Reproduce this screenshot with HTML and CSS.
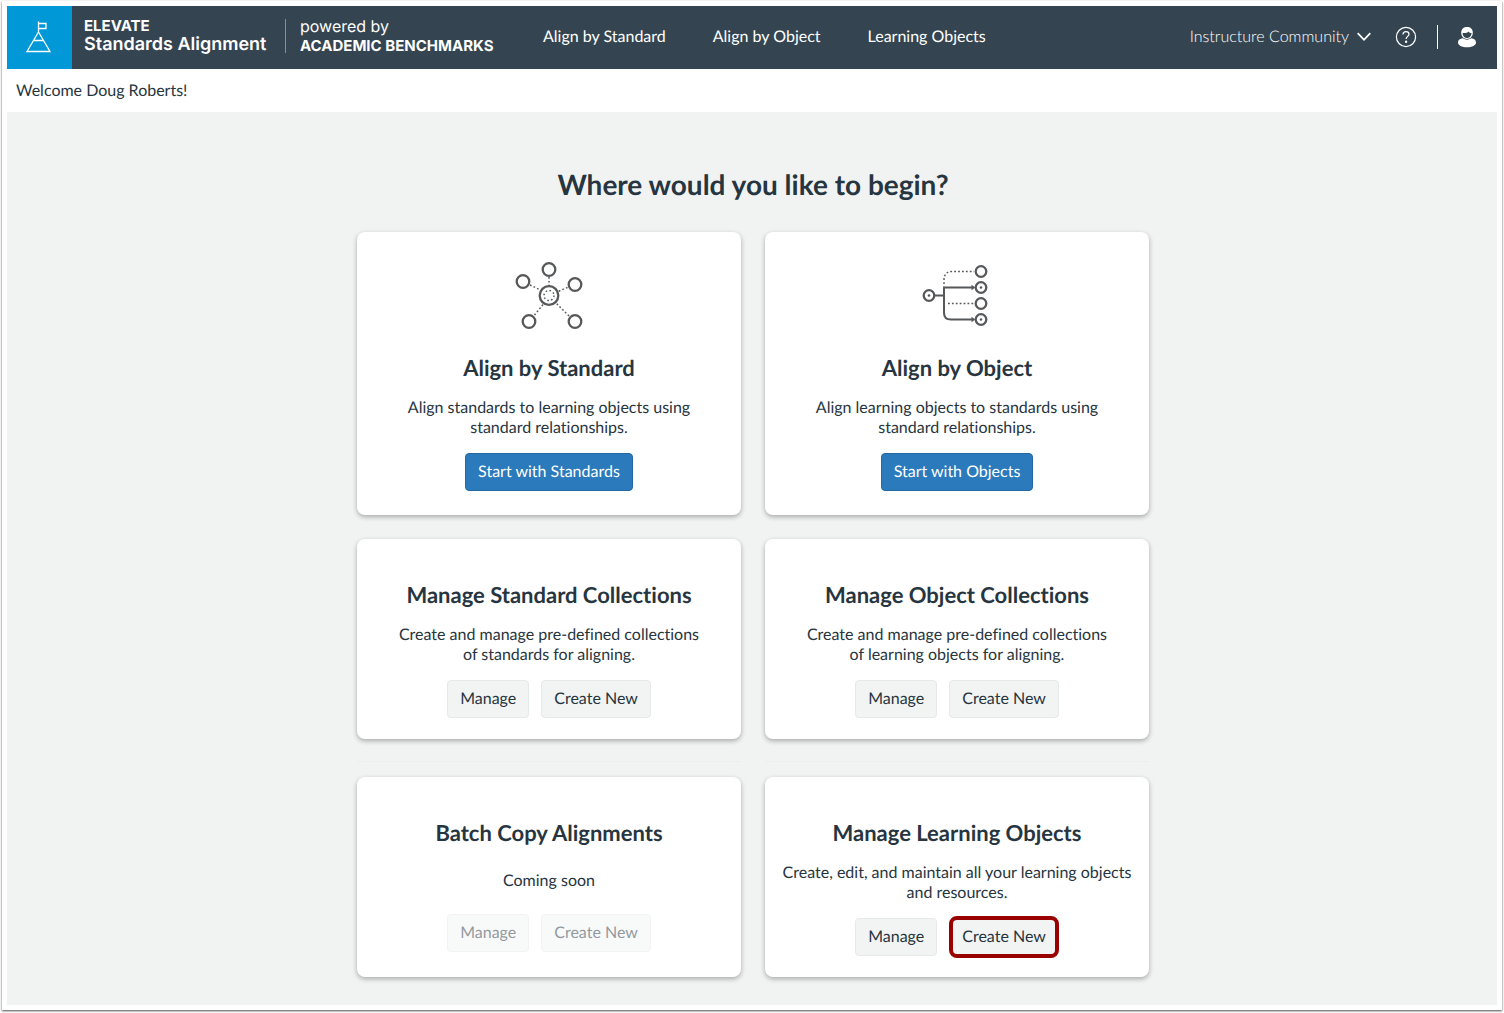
FILE: index.html
```html
<!DOCTYPE html>
<html lang="en">
<head>
<meta charset="utf-8">
<meta name="viewport" content="width=device-width, initial-scale=1">
<title>Elevate Standards Alignment</title>
<link rel="stylesheet" href="styles.css">
</head>
<body>
<div class="frame">
  <header class="topbar">
    <a class="logo" href="#" aria-label="Home">
      <svg width="28" height="36" viewBox="0 0 28 36" fill="none" stroke="#fff" stroke-width="1.3"><path d="M13.500 13V2.500M13.500 4.500h7.500v5h-7.500M13.500 13L2 32.500h23zM8.600 21.500h9.800"/></svg>
    </a>
    <div class="brand">
      <span class="brand-small">ELEVATE</span>
      <span class="brand-large">Standards Alignment</span>
    </div>
    <div class="powered">
      <span class="powered-by">powered by</span>
      <span class="powered-name">ACADEMIC BENCHMARKS</span>
    </div>
    <nav class="menu">
      <a href="#">Align by Standard</a>
      <a href="#">Align by Object</a>
      <a href="#">Learning Objects</a>
    </nav>
    <div class="account">
      <button class="org" type="button">Instructure Community
        <svg width="14" height="10" viewBox="0 0 14 10" fill="none" stroke="#fff" stroke-width="1.800"><path d="M.7 1.200L7 7.800l6.300-6.600"/></svg>
      </button>
      <button class="help" type="button" aria-label="Help">
        <svg width="22" height="22" viewBox="0 0 22 22" fill="none" stroke="#fff" stroke-width="1.200"><circle cx="11" cy="11" r="9.600"/><path d="M8 8.600C8 6.700 9.200 5.600 11 5.600s3 1.100 3 2.700c0 2.100-2.900 2.200-2.900 4.800"/><circle cx="11.100" cy="15.700" r=".6" fill="#fff"/></svg>
      </button>
      <span class="separator"></span>
      <button class="user" type="button" aria-label="Profile">
        <svg width="20" height="22" viewBox="0 0 20 22" fill="#fff"><path d="M4.200 6.800C4.200 3 6.600 1 10 1s5.800 2 5.800 5.800c0 3.400-2.500 6.200-5.800 6.200S4.200 10.200 4.200 6.800z"/><path d="M5.600 7c2.700.4 4.800-.2 6-1.500.7 1 1.700 1.500 2.900 1.500 0 2.800-1.900 5-4.500 5S5.600 9.800 5.600 7z" fill="#344551"/><path d="M1 16.500c0-2.400 1.900-3.900 4.800-4.200 2.600 1.800 5.800 1.800 8.400 0 2.900.3 4.800 1.800 4.800 4.200 0 3-4 4.800-9 4.800s-9-1.800-9-4.800z"/></svg>
      </button>
    </div>
  </header>
  <p class="welcome">Welcome Doug Roberts!</p>
  <main class="content">
    <h1>Where would you like to begin?</h1>
    <div class="cards">
      <section class="card card-start">
        <svg class="art" width="80" height="80" viewBox="0 0 80 80" fill="none" stroke="#56585a" stroke-width="2.300"><circle cx="40" cy="13.500" r="6.300"/><circle cx="14" cy="25.500" r="6.300"/><circle cx="66" cy="28.500" r="6.300"/><circle cx="20" cy="65.500" r="6.300"/><circle cx="66" cy="65.500" r="6.300"/><circle cx="40" cy="39.500" r="9.300"/><circle cx="40" cy="39.500" r="5" stroke-width="1.500" stroke-dasharray="1.600 2.300"/><path d="M40 21v9M21 29l9.500 4.500M58.500 31.500L49 35.500M25.500 59L34 48.500M60 60L47.500 47.500" stroke-width="1.500" stroke-dasharray="1.700 2.200"/></svg>
        <h2>Align by Standard</h2>
        <p>Align standards to learning objects using<br>standard relationships.</p>
        <div class="actions"><button class="btn btn-primary" type="button">Start with Standards</button></div>
      </section>
      <section class="card card-start">
        <svg class="art" width="80" height="80" viewBox="0 0 80 80" fill="none" stroke="#56585a" stroke-width="2.300"><circle cx="12" cy="39.500" r="5.300"/><circle cx="64" cy="15.500" r="5.300"/><circle cx="64" cy="31.500" r="5.300"/><circle cx="64" cy="47.500" r="5.300"/><circle cx="64" cy="63.500" r="5.300"/><path d="M18 39.500h9M56 31.500H27V57q0 6.500 7 6.500h22" stroke-width="2"/><path d="M54.500 28.800l3.800 2.700-3.800 2.700zM54.500 60.800l3.800 2.700-3.800 2.700z" fill="#56585a" stroke="none"/><path d="M27 28v-4q0-8.500 8-8.500h22M31 47.500h26" stroke-width="1.500" stroke-dasharray="1.800 2.100"/><g fill="#56585a" stroke="none"><circle cx="12" cy="39.500" r="1.300"/><circle cx="64" cy="31.500" r="1.300"/><circle cx="64" cy="63.500" r="1.300"/></g></svg>
        <h2>Align by Object</h2>
        <p>Align learning objects to standards using<br>standard relationships.</p>
        <div class="actions"><button class="btn btn-primary" type="button">Start with Objects</button></div>
      </section>
      <section class="card">
        <h2>Manage Standard Collections</h2>
        <p>Create and manage pre-defined collections<br>of standards for aligning.</p>
        <div class="actions"><button class="btn" type="button">Manage</button><button class="btn" type="button">Create New</button></div>
      </section>
      <section class="card">
        <h2>Manage Object Collections</h2>
        <p>Create and manage pre-defined collections<br>of learning objects for aligning.</p>
        <div class="actions"><button class="btn" type="button">Manage</button><button class="btn" type="button">Create New</button></div>
      </section>
    </div>
    <div class="dividers"><hr><hr></div>
    <div class="cards">
      <section class="card card-soon">
        <h2>Batch Copy Alignments</h2>
        <p>Coming soon</p>
        <div class="actions"><button class="btn" type="button" disabled>Manage</button><button class="btn" type="button" disabled>Create New</button></div>
      </section>
      <section class="card">
        <h2>Manage Learning Objects</h2>
        <p>Create, edit, and maintain all your learning objects<br>and resources.</p>
        <div class="actions"><button class="btn" type="button">Manage</button><button class="btn btn-marked" type="button">Create New</button></div>
      </section>
    </div>
  </main>
</div>
</body>
</html>
```
FILE: styles.css
```css
* {
  box-sizing: border-box;
}

body {
  margin: 0;
  background: #fff;
  color: #273540;
  font: 16px/20px Lato, "Liberation Sans", sans-serif;
  font-variant-ligatures: none;
  text-rendering: geometricPrecision;
}

h1, h2, p {
  margin: 0;
}

button {
  font: inherit;
  color: inherit;
  cursor: pointer;
  font-variant-ligatures: none;
  text-rendering: inherit;
}

.frame {
  margin: 1px 2px 3px;
  padding: 5px;
  background: #fff;
  box-shadow: 0 1px 2px rgba(0, 0, 0, 0.7);
}

/* Header */

.topbar {
  display: flex;
  align-items: center;
  height: 63px;
  padding-right: 20px;
  background: #344551;
  color: #fff;
}

.topbar a {
  color: #fff;
  text-decoration: none;
}

.logo {
  display: flex;
  align-items: center;
  justify-content: center;
  align-self: stretch;
  width: 65px;
  padding: 0 2px 2px 0;
  background: #0098d7;
}

.brand,
.powered {
  display: flex;
  flex-direction: column;
  margin-bottom: 4px;
  font-family: Inter, "Liberation Sans", sans-serif;
  white-space: nowrap;
}

.brand {
  width: 213px;
  padding-left: 12px;
}

.brand-small {
  font-size: 15px;
  font-weight: 700;
  line-height: 18px;
}

.brand-large {
  font-size: 18px;
  font-weight: 600;
}

.powered {
  height: 34px;
  justify-content: center;
  width: 224px;
  padding-left: 14px;
  border-left: 1px solid #84919a;
}

.powered-by {
  font-size: 16px;
}

.powered-name {
  font-size: 15px;
  font-weight: 700;
}

.menu {
  display: flex;
  gap: 47px;
  margin: 0 0 2px 34px;
  white-space: nowrap;
}

.account {
  display: flex;
  align-items: center;
  margin: 0 0 2px auto;
}

.account button {
  display: flex;
  align-items: center;
  padding: 0;
  border: 0;
  background: none;
}

.account .org {
  gap: 8px;
  font-weight: 300;
  white-space: nowrap;
}

.account .help {
  margin-left: 24px;
}

.separator {
  width: 1px;
  height: 24px;
  margin: 0 19px 0 20px;
  background: #fff;
}

/* Page */

.welcome {
  padding: 12px 9px 11px;
}

.content {
  padding: 55px 0 28px 2px;
  background: #f1f3f3;
}

h1 {
  margin-bottom: 31px;
  font-size: 28px;
  line-height: 34px;
  text-align: center;
}

.cards,
.dividers {
  display: grid;
  grid-template-columns: 1fr 1fr;
  gap: 24px;
  max-width: 792px;
  margin: 0 auto;
}

.dividers {
  padding: 22px 0 15px;
}

hr {
  width: 100%;
  height: 1px;
  margin: 0;
  border: 0;
  background: #edefef;
}

.card {
  display: flex;
  flex-direction: column;
  align-items: center;
  padding: 42px 8px 21px;
  border-radius: 8px;
  background: #fff;
  box-shadow: 0 2px 5px rgba(0, 0, 0, 0.3);
  text-align: center;
}

.card-start {
  padding: 24px 8px;
}

.art {
  margin-bottom: 18px;
}

h2 {
  margin-bottom: 16px;
  font-size: 22px;
  line-height: 28px;
}

.actions {
  display: flex;
  align-items: center;
  gap: 12px;
  height: 38px;
  margin-top: 15px;
}

.card-soon p {
  margin-top: 8px;
}

.card-soon .actions {
  margin-top: 23px;
}

.btn {
  height: 38px;
  padding: 0 12px;
  border: 1px solid #e6e9e9;
  border-radius: 4px;
  background: #f2f4f4;
}

.btn-primary {
  border-color: #2369a4;
  background: #2b7abc;
  color: #fff;
}

.btn:disabled {
  opacity: 0.5;
  cursor: default;
}

.btn-marked {
  height: 42px;
  padding: 0 9px;
  border: 4px solid #990000;
  border-radius: 8px;
}
```
